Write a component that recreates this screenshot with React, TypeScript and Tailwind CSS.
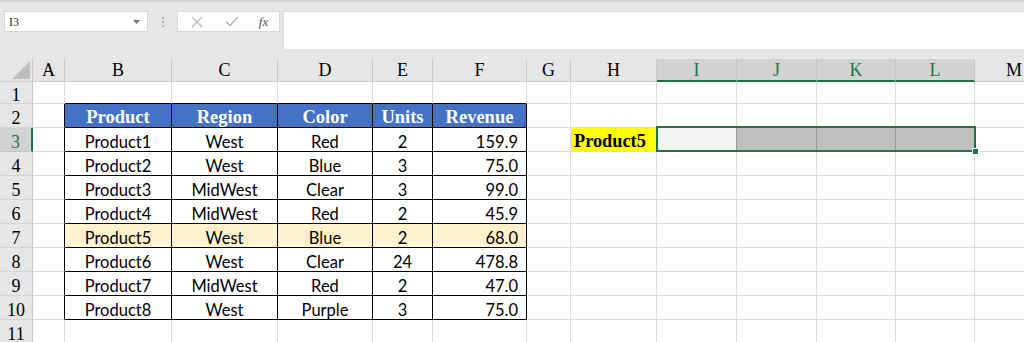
import React from "react";

const COLS = ["A", "B", "C", "D", "E", "F", "G", "H", "I", "J", "K", "L", "M"];
const TABLE_COLS = ["B", "C", "D", "E", "F"];
const SEL_COLS = ["I", "J", "K", "L"];

const DATA: [string, string, string, string, string][] = [
  ["Product1", "West", "Red", "2", "159.9"],
  ["Product2", "West", "Blue", "3", "75.0"],
  ["Product3", "MidWest", "Clear", "3", "99.0"],
  ["Product4", "MidWest", "Red", "2", "45.9"],
  ["Product5", "West", "Blue", "2", "68.0"],
  ["Product6", "West", "Clear", "24", "478.8"],
  ["Product7", "MidWest", "Red", "2", "47.0"],
  ["Product8", "West", "Purple", "3", "75.0"],
];

const HEADERS = ["Product", "Region", "Color", "Units", "Revenue"];

function rowHeight(r: number) {
  return r === 1 ? "h-[22px]" : "h-[24px]";
}

function Cell({ r, c }: { r: number; c: string }) {
  const ti = TABLE_COLS.indexOf(c);
  const inTable = ti >= 0 && r >= 2 && r <= 10;
  const rightBlack = inTable || (c === "A" && r >= 2 && r <= 10);
  const bottomBlack = ti >= 0 && r >= 1 && r <= 10;

  let bg = "bg-white";
  let content: React.ReactNode = null;
  let align = "justify-center";
  let font = "font-['Lato',sans-serif] text-[16.5px] text-black pt-[5px]";

  if (inTable && r === 2) {
    bg = "bg-[#4472c4]";
    content = HEADERS[ti];
    font = "font-['Liberation_Serif',serif] font-bold text-[18.5px] text-white pt-[4px]";
  } else if (inTable) {
    const d = DATA[r - 3];
    content = d[ti];
    if (r === 7) bg = "bg-[#fff2cc]";
    if (c === "F") align = "justify-end pr-[8px]";
  }

  if (r === 3 && c === "H") {
    bg = "bg-[#ffff00]";
    content = "Product5";
    align = "justify-start pl-[3px]";
    font = "font-['Liberation_Serif',serif] font-bold text-[18.3px] text-black pt-[4px]";
  }

  let rightCol = rightBlack ? "border-r-black" : "border-r-[#dcdcdc]";
  const bottomCol = bottomBlack ? "border-b-black" : "border-b-[#dcdcdc]";

  if (r === 3 && c === "I") bg = "bg-[#f2f2f2]";
  if (r === 3 && (c === "J" || c === "K" || c === "L")) bg = "bg-[#bfbfbf]";
  if (r === 3 && SEL_COLS.includes(c)) rightCol = "border-r-[#9a9a9a]";

  return (
    <div
      className={`${rowHeight(r)} flex items-center ${align} ${bg} ${font} border-r border-b ${rightCol} ${bottomCol} whitespace-nowrap`}
    >
      {content}
    </div>
  );
}

function ColHeader({ c }: { c: string }) {
  const sel = SEL_COLS.includes(c);
  return (
    <div
      className={`h-[23px] flex items-center justify-center pt-[1px] font-['Liberation_Serif',serif] text-[18px] border-r ${
        sel
          ? "bg-[#d2d2d2] text-[#217346] border-r-[#c4c4c4] border-b-2 border-b-[#217346]"
          : "bg-[#e6e6e6] text-black border-r-[#cacaca] border-b border-b-[#d0d0d0]"
      }`}
    >
      {c}
    </div>
  );
}

function RowHeader({ r }: { r: number }) {
  const sel = r === 3;
  return (
    <div
      className={`${rowHeight(r)} flex items-center justify-center pt-[5px] font-['Liberation_Serif',serif] text-[18px] border-b ${
        sel
          ? "bg-[#d2d2d2] text-[#217346] border-r-2 border-r-[#217346] border-b-[#c4c4c4]"
          : "bg-[#e6e6e6] text-black border-r border-r-[#c8c8c8] border-b-[#d4d4d4]"
      }`}
    >
      {r}
    </div>
  );
}

export default function App() {
  const rows = Array.from({ length: 11 }, (_, i) => i + 1);
  return (
    <div className="w-[1024px] h-[342px] overflow-hidden bg-[#e6e6e6] select-none">
      {/* ribbon edge */}
      <div className="h-[2px] bg-[#d2d2d2]" />
      {/* formula bar area */}
      <div className="flex h-[57px] items-start pt-[9px]">
        <div className="ml-[4px] w-[144px] h-[21px] bg-white border border-[#d6d6d6] flex items-center justify-between pl-[4px] pr-[7px]">
          <span className="font-['Liberation_Serif',serif] text-[12px] text-[#333]">I3</span>
          <svg width="7" height="4" viewBox="0 0 7 4">
            <path d="M0 0h7L3.5 4z" fill="#777" />
          </svg>
        </div>
        <div className="w-[29px] h-[21px] flex flex-col items-center justify-center gap-[2px]">
          <span className="w-[2px] h-[2px] bg-[#b4b4b4]" />
          <span className="w-[2px] h-[2px] bg-[#b4b4b4]" />
          <span className="w-[2px] h-[2px] bg-[#b4b4b4]" />
        </div>
        <div className="w-[103px] h-[21px] bg-white border border-[#dadada] flex items-center">
          <div className="w-[36px] flex justify-center ml-[1px]">
            <svg width="12" height="12" viewBox="0 0 12 12">
              <path d="M1 1l10 10M11 1L1 11" stroke="#b8b8b8" strokeWidth="1.2" />
            </svg>
          </div>
          <div className="w-[33px] flex justify-center">
            <svg width="14" height="11" viewBox="0 0 14 11">
              <path d="M1 5.5l4 4L13 1" stroke="#b8b8b8" strokeWidth="1.6" fill="none" />
            </svg>
          </div>
          <div className="w-[31px] flex justify-center">
            <span className="font-['Liberation_Serif',serif] italic text-[13px] text-[#555]">fx</span>
          </div>
        </div>
        <div className="ml-[3px] flex-1 h-[38px] bg-white border-l border-t border-[#d8d8d8]" />
      </div>

      {/* sheet grid */}
      <div className="relative">
        <div className="grid w-[1100px] grid-cols-[33px_32px_107px_106px_95px_60px_94px_44px_86px_80px_80px_79px_79px_79px_1fr]">
          <div className="h-[23px] bg-[#e6e6e6] border-r border-b border-r-[#c8c8c8] border-b-[#d0d0d0] flex items-end justify-end pr-[2px] pb-[2px]">
            <svg width="18" height="18" viewBox="0 0 18 18">
              <path d="M18 0V18H0z" fill="#bdbdbd" />
            </svg>
          </div>
          {COLS.map((c) => (
            <ColHeader key={c} c={c} />
          ))}
          <div className="h-[23px] bg-[#e6e6e6] border-b border-b-[#d0d0d0]" />
          {rows.map((r) => (
            <React.Fragment key={r}>
              <RowHeader r={r} />
              {COLS.map((c) => (
                <Cell key={c} r={r} c={c} />
              ))}
              <div className={`${rowHeight(r)} bg-white border-b border-b-[#dcdcdc]`} />
            </React.Fragment>
          ))}
        </div>
        {/* selection I3:L3 */}
        <div className="absolute left-[656px] top-[67px] w-[320px] h-[26px] border-2 border-[#217346] pointer-events-none" />
        <div className="absolute left-[972px] top-[89px] w-[7px] h-[7px] bg-[#217346] border border-white pointer-events-none" />
      </div>
    </div>
  );
}
